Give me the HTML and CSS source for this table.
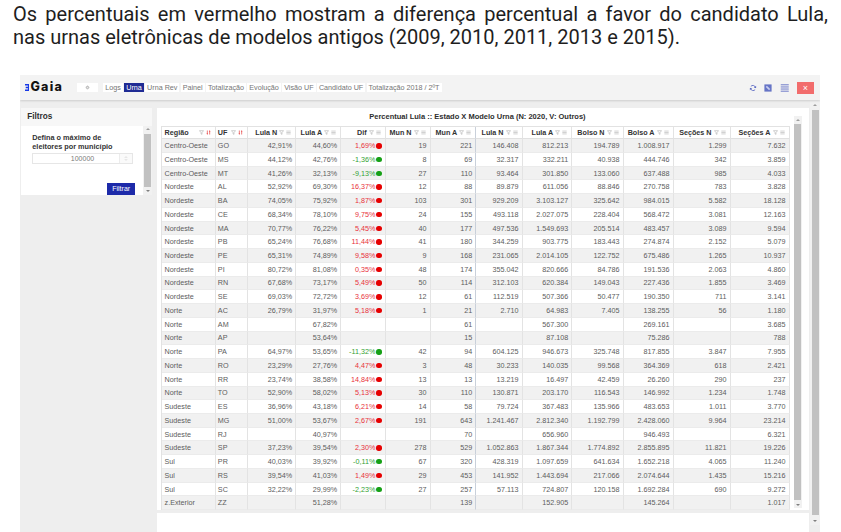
FILE: index.html
```html
<!DOCTYPE html>
<html lang="pt-BR">
<head>
<meta charset="utf-8">
<title>Gaia — Urna</title>
<link rel="stylesheet" href="styles.css">
</head>
<body>
<p class="intro"><span class="line1">Os percentuais em vermelho mostram a diferença percentual a favor do candidato Lula,</span><span class="line2">nas urnas eletrônicas de modelos antigos (2009, 2010, 2011, 2013 e 2015).</span></p>

<div class="app">
  <header class="toolbar">
    <div class="logo">
      <svg class="logo-mark" viewBox="0 0 5 8"><path d="M0 0H5V8H0V6.3H3.3V4.85H0.8V3.15H3.3V1.7H0Z" fill="#1738e6"/></svg>
      <span class="logo-text">Gaia</span>
    </div>
    <span class="gear"><svg viewBox="0 0 10 10"><circle cx="5" cy="5" r="2.9" fill="none" stroke="#8c8c8c" stroke-width="1.5" stroke-dasharray="1.4 0.9"/><circle cx="5" cy="5" r="1.7" fill="none" stroke="#8c8c8c" stroke-width="0.9"/></svg></span>
    <nav class="tabs">
      <span class="tab">Logs</span>
      <span class="tab active">Urna</span>
      <span class="tab">Urna Rev</span>
      <span class="tab">Painel</span>
      <span class="tab">Totalização</span>
      <span class="tab">Evolução</span>
      <span class="tab">Visão UF</span>
      <span class="tab">Candidato UF</span>
      <span class="tab">Totalização 2018 / 2ºT</span>
    </nav>
    <div class="tools">
      <svg class="tool" viewBox="0 0 10 10"><path d="M7.9 4.3A3.1 3.1 0 0 0 2.3 3.1M2.1 5.7A3.1 3.1 0 0 0 7.7 6.9" stroke="#5d6bc4" stroke-width="1.1" fill="none"/><path d="M8.9 2.2V5H6.1Z M1.1 7.8V5H3.9Z" fill="#5d6bc4"/></svg>
      <svg class="tool" viewBox="0 0 10 10"><rect x="0.5" y="0.5" width="9" height="9" fill="#6674c6"/><path d="M2.2 3.6L3.6 2.2L7.8 6.4L6.4 7.8Z" fill="#c9cef0"/></svg>
      <svg class="tool menu" viewBox="0 0 10 10"><path d="M0 1H10M0 3.7H10M0 6.3H10M0 9H10" stroke="#5d6bc4" stroke-width="1.1"/></svg>
      <span class="close">×</span>
    </div>
  </header>

  <div class="content">
    <aside class="filters">
      <div class="filters-head">Filtros</div>
      <div class="filters-body">
        <form class="filters-form">
          <label class="filters-label">Defina o máximo de eleitores por município</label>
          <div class="num-input"><span class="num-value">100000</span><span class="spin"><svg viewBox="0 0 6 10"><path d="M1.3 4L3 2.3L4.7 4M1.3 6L3 7.7L4.7 6" stroke="#b5b5b5" stroke-width="0.7" fill="none"/></svg></span></div>
          <div class="form-actions"><span class="btn">Filtrar</span></div>
        </form>
        <div class="vscroll small">
          <span class="arr up"></span><span class="thumb"></span><span class="arr down"></span>
        </div>
      </div>
    </aside>

    <div class="main-col">
      <section class="panel">
        <div class="panel-main">
          <div class="panel-title">Percentual Lula :: Estado X Modelo Urna (N: 2020, V: Outros)</div>
          <table class="grid">
            <colgroup>
              <col class="c1"><col class="c2"><col class="c3"><col class="c4"><col class="c5"><col class="c6"><col class="c7"><col class="c8"><col class="c9"><col class="c10"><col class="c11"><col class="c12"><col class="c13">
            </colgroup>
            <thead>
              <tr>
                <th class="tl"><div class="hd"><span class="lbl">Região</span><svg class="ic"><use href="#i-filter"/></svg><svg class="ic"><use href="#i-sort"/></svg></div></th>
                <th class="tl"><div class="hd"><span class="lbl">UF</span><svg class="ic"><use href="#i-filter"/></svg><svg class="ic"><use href="#i-sort"/></svg></div></th>
                <th><div class="hd">Lula N<svg class="ic"><use href="#i-filter"/></svg><svg class="ic"><use href="#i-menu"/></svg></div></th>
                <th><div class="hd">Lula A<svg class="ic"><use href="#i-filter"/></svg><svg class="ic"><use href="#i-menu"/></svg></div></th>
                <th><div class="hd">Dif<svg class="ic"><use href="#i-filter"/></svg><svg class="ic"><use href="#i-menu"/></svg></div></th>
                <th><div class="hd">Mun N<svg class="ic"><use href="#i-filter"/></svg><svg class="ic"><use href="#i-menu"/></svg></div></th>
                <th class="sep"><div class="hd">Mun A<svg class="ic"><use href="#i-filter"/></svg><svg class="ic"><use href="#i-menu"/></svg></div></th>
                <th><div class="hd">Lula N<svg class="ic"><use href="#i-filter"/></svg><svg class="ic"><use href="#i-menu"/></svg></div></th>
                <th><div class="hd">Lula A<svg class="ic"><use href="#i-filter"/></svg><svg class="ic"><use href="#i-menu"/></svg></div></th>
                <th><div class="hd">Bolso N<svg class="ic"><use href="#i-filter"/></svg><svg class="ic"><use href="#i-menu"/></svg></div></th>
                <th><div class="hd">Bolso A<svg class="ic"><use href="#i-filter"/></svg><svg class="ic"><use href="#i-menu"/></svg></div></th>
                <th><div class="hd">Seções N<svg class="ic"><use href="#i-filter"/></svg><svg class="ic"><use href="#i-menu"/></svg></div></th>
                <th><div class="hd">Seções A<svg class="ic"><use href="#i-filter"/></svg><svg class="ic"><use href="#i-menu"/></svg></div></th>
              </tr>
            </thead>
            <tbody>
              <tr><td class="tl">Centro-Oeste</td><td class="tl">GO</td><td>42,91%</td><td>44,60%</td><td class="dif pos">1,69%<i class="dot"></i></td><td>19</td><td class="sep">221</td><td>146.408</td><td>812.213</td><td>194.789</td><td>1.008.917</td><td>1.299</td><td>7.632</td></tr>
              <tr><td class="tl">Centro-Oeste</td><td class="tl">MS</td><td>44,12%</td><td>42,76%</td><td class="dif neg">-1,36%<i class="dot"></i></td><td>8</td><td class="sep">69</td><td>32.317</td><td>332.211</td><td>40.938</td><td>444.746</td><td>342</td><td>3.859</td></tr>
              <tr><td class="tl">Centro-Oeste</td><td class="tl">MT</td><td>41,26%</td><td>32,13%</td><td class="dif neg">-9,13%<i class="dot"></i></td><td>27</td><td class="sep">110</td><td>93.464</td><td>301.850</td><td>133.060</td><td>637.488</td><td>985</td><td>4.033</td></tr>
              <tr><td class="tl">Nordeste</td><td class="tl">AL</td><td>52,92%</td><td>69,30%</td><td class="dif pos">16,37%<i class="dot"></i></td><td>12</td><td class="sep">88</td><td>89.879</td><td>611.056</td><td>88.846</td><td>270.758</td><td>783</td><td>3.828</td></tr>
              <tr><td class="tl">Nordeste</td><td class="tl">BA</td><td>74,05%</td><td>75,92%</td><td class="dif pos">1,87%<i class="dot"></i></td><td>103</td><td class="sep">301</td><td>929.209</td><td>3.103.127</td><td>325.642</td><td>984.015</td><td>5.582</td><td>18.128</td></tr>
              <tr><td class="tl">Nordeste</td><td class="tl">CE</td><td>68,34%</td><td>78,10%</td><td class="dif pos">9,75%<i class="dot"></i></td><td>24</td><td class="sep">155</td><td>493.118</td><td>2.027.075</td><td>228.404</td><td>568.472</td><td>3.081</td><td>12.163</td></tr>
              <tr><td class="tl">Nordeste</td><td class="tl">MA</td><td>70,77%</td><td>76,22%</td><td class="dif pos">5,45%<i class="dot"></i></td><td>40</td><td class="sep">177</td><td>497.536</td><td>1.549.693</td><td>205.514</td><td>483.457</td><td>3.089</td><td>9.594</td></tr>
              <tr><td class="tl">Nordeste</td><td class="tl">PB</td><td>65,24%</td><td>76,68%</td><td class="dif pos">11,44%<i class="dot"></i></td><td>41</td><td class="sep">180</td><td>344.259</td><td>903.775</td><td>183.443</td><td>274.874</td><td>2.152</td><td>5.079</td></tr>
              <tr><td class="tl">Nordeste</td><td class="tl">PE</td><td>65,31%</td><td>74,89%</td><td class="dif pos">9,58%<i class="dot"></i></td><td>9</td><td class="sep">168</td><td>231.065</td><td>2.014.105</td><td>122.752</td><td>675.486</td><td>1.265</td><td>10.937</td></tr>
              <tr><td class="tl">Nordeste</td><td class="tl">PI</td><td>80,72%</td><td>81,08%</td><td class="dif pos">0,35%<i class="dot"></i></td><td>48</td><td class="sep">174</td><td>355.042</td><td>820.666</td><td>84.786</td><td>191.536</td><td>2.063</td><td>4.860</td></tr>
              <tr><td class="tl">Nordeste</td><td class="tl">RN</td><td>67,68%</td><td>73,17%</td><td class="dif pos">5,49%<i class="dot"></i></td><td>50</td><td class="sep">114</td><td>312.103</td><td>620.384</td><td>149.043</td><td>227.436</td><td>1.855</td><td>3.469</td></tr>
              <tr><td class="tl">Nordeste</td><td class="tl">SE</td><td>69,03%</td><td>72,72%</td><td class="dif pos">3,69%<i class="dot"></i></td><td>12</td><td class="sep">61</td><td>112.519</td><td>507.366</td><td>50.477</td><td>190.350</td><td>711</td><td>3.141</td></tr>
              <tr><td class="tl">Norte</td><td class="tl">AC</td><td>26,79%</td><td>31,97%</td><td class="dif pos">5,18%<i class="dot"></i></td><td>1</td><td class="sep">21</td><td>2.710</td><td>64.983</td><td>7.405</td><td>138.255</td><td>56</td><td>1.180</td></tr>
              <tr><td class="tl">Norte</td><td class="tl">AM</td><td></td><td>67,82%</td><td class="dif"></td><td></td><td class="sep">61</td><td></td><td>567.300</td><td></td><td>269.161</td><td></td><td>3.685</td></tr>
              <tr><td class="tl">Norte</td><td class="tl">AP</td><td></td><td>53,64%</td><td class="dif"></td><td></td><td class="sep">15</td><td></td><td>87.108</td><td></td><td>75.286</td><td></td><td>788</td></tr>
              <tr><td class="tl">Norte</td><td class="tl">PA</td><td>64,97%</td><td>53,65%</td><td class="dif neg">-11,32%<i class="dot"></i></td><td>42</td><td class="sep">94</td><td>604.125</td><td>946.673</td><td>325.748</td><td>817.855</td><td>3.847</td><td>7.955</td></tr>
              <tr><td class="tl">Norte</td><td class="tl">RO</td><td>23,29%</td><td>27,76%</td><td class="dif pos">4,47%<i class="dot"></i></td><td>3</td><td class="sep">48</td><td>30.233</td><td>140.035</td><td>99.568</td><td>364.369</td><td>618</td><td>2.421</td></tr>
              <tr><td class="tl">Norte</td><td class="tl">RR</td><td>23,74%</td><td>38,58%</td><td class="dif pos">14,84%<i class="dot"></i></td><td>13</td><td class="sep">13</td><td>13.219</td><td>16.497</td><td>42.459</td><td>26.260</td><td>290</td><td>237</td></tr>
              <tr><td class="tl">Norte</td><td class="tl">TO</td><td>52,90%</td><td>58,02%</td><td class="dif pos">5,13%<i class="dot"></i></td><td>30</td><td class="sep">110</td><td>130.871</td><td>203.170</td><td>116.543</td><td>146.992</td><td>1.234</td><td>1.748</td></tr>
              <tr><td class="tl">Sudeste</td><td class="tl">ES</td><td>36,96%</td><td>43,18%</td><td class="dif pos">6,21%<i class="dot"></i></td><td>14</td><td class="sep">58</td><td>79.724</td><td>367.483</td><td>135.966</td><td>483.653</td><td>1.011</td><td>3.770</td></tr>
              <tr><td class="tl">Sudeste</td><td class="tl">MG</td><td>51,00%</td><td>53,67%</td><td class="dif pos">2,67%<i class="dot"></i></td><td>191</td><td class="sep">643</td><td>1.241.467</td><td>2.812.340</td><td>1.192.799</td><td>2.428.060</td><td>9.964</td><td>23.214</td></tr>
              <tr><td class="tl">Sudeste</td><td class="tl">RJ</td><td></td><td>40,97%</td><td class="dif"></td><td></td><td class="sep">70</td><td></td><td>656.960</td><td></td><td>946.493</td><td></td><td>6.321</td></tr>
              <tr><td class="tl">Sudeste</td><td class="tl">SP</td><td>37,23%</td><td>39,54%</td><td class="dif pos">2,30%<i class="dot"></i></td><td>278</td><td class="sep">529</td><td>1.052.863</td><td>1.867.344</td><td>1.774.892</td><td>2.855.895</td><td>11.821</td><td>19.226</td></tr>
              <tr><td class="tl">Sul</td><td class="tl">PR</td><td>40,03%</td><td>39,92%</td><td class="dif neg">-0,11%<i class="dot"></i></td><td>67</td><td class="sep">320</td><td>428.319</td><td>1.097.659</td><td>641.634</td><td>1.652.218</td><td>4.065</td><td>11.240</td></tr>
              <tr><td class="tl">Sul</td><td class="tl">RS</td><td>39,54%</td><td>41,03%</td><td class="dif pos">1,49%<i class="dot"></i></td><td>29</td><td class="sep">453</td><td>141.952</td><td>1.443.694</td><td>217.066</td><td>2.074.644</td><td>1.435</td><td>15.216</td></tr>
              <tr><td class="tl">Sul</td><td class="tl">SC</td><td>32,22%</td><td>29,99%</td><td class="dif neg">-2,23%<i class="dot"></i></td><td>27</td><td class="sep">257</td><td>57.113</td><td>724.807</td><td>120.158</td><td>1.692.284</td><td>690</td><td>9.272</td></tr>
              <tr><td class="tl">z.Exterior</td><td class="tl">ZZ</td><td></td><td>51,28%</td><td class="dif"></td><td></td><td class="sep">139</td><td></td><td>152.905</td><td></td><td>145.264</td><td></td><td>1.017</td></tr>
            </tbody>
          </table>
        </div>
        <div class="vscroll inner">
          <span class="arr up"></span><span class="thumb"></span><span class="arr down"></span>
        </div>
      </section>
      <section class="panel next"></section>
    </div>

    <div class="vscroll outer">
      <span class="arr up"></span><span class="thumb"></span><span class="arr down"></span>
    </div>
  </div>
</div>

<svg class="defs" aria-hidden="true">
  <symbol id="i-filter" viewBox="0 0 6 6"><path d="M0.6 0.8H5.4L3.6 3.1V5.3L2.4 4.6V3.1Z" fill="none" stroke="#a3a3a3" stroke-width="0.6" stroke-linejoin="round"/></symbol>
  <symbol id="i-menu" viewBox="0 0 6 6"><path d="M0.4 1.3H5.6M0.4 3H5.6M0.4 4.7H5.6" stroke="#a3a3a3" stroke-width="0.6"/></symbol>
  <symbol id="i-sort" viewBox="0 0 6 6"><path d="M1.6 0.6V5.2M4.4 0.8V5.4" stroke="#e5393a" stroke-width="0.8"/><path d="M0.6 4.1L1.6 5.4L2.6 4.1Z M3.4 1.9L4.4 0.6L5.4 1.9Z" fill="#e5393a"/></symbol>
</svg>
</body>
</html>
```

FILE: styles.css
```css
* { box-sizing: border-box; }

body {
  margin: 0;
  background: #ffffff;
  font-family: "Liberation Sans", Arial, sans-serif;
}

/* Intro paragraph */
.intro {
  margin: 2.5px 13px 0;
  font-family: Roboto, "Noto Sans", sans-serif;
  font-size: 20px;
  line-height: 23.5px;
  color: #1e1e1e;
}
.intro .line1 { display: block; text-align: justify; text-align-last: justify; }
.intro .line2 { display: block; }

/* App frame */
.app {
  margin: 25.5px 0 0 20px;
  width: 800px;
  height: 457px;
  overflow: hidden;
  background: #eeeeee;
}

.toolbar {
  position: relative;
  z-index: 1;
  height: 25px;
  display: flex;
  align-items: center;
  background: #f3f3f3;
  box-shadow: 0 1px 2px rgba(0,0,0,0.14);
}

.logo {
  display: flex;
  align-items: center;
  width: 52.3px;
  margin-left: 5px;
}
.logo-mark { width: 4.4px; height: 7px; display: block; }
.logo-text {
  margin-left: 1px;
  font-family: Inter, "Liberation Sans", sans-serif;
  font-weight: 800;
  font-size: 12.5px;
  letter-spacing: 1.3px;
  color: #121212;
  line-height: 1;
}

.gear {
  width: 21px;
  height: 9.7px;
  background: #ffffff;
  display: flex;
  align-items: center;
  justify-content: center;
}
.gear svg { width: 5px; height: 5px; display: block; }

.tabs {
  display: flex;
  gap: 1.3px;
  margin-left: 5px;
}
.tab {
  height: 9.7px;
  line-height: 9.7px;
  padding: 0 2px;
  background: #ffffff;
  font-size: 7.2px;
  color: #757575;
  white-space: nowrap;
}
.tab.active { background: #1f2b94; color: #ffffff; }

.tools {
  margin-left: auto;
  margin-right: 6px;
  display: flex;
  align-items: center;
}
.tool { width: 8px; height: 8px; display: block; margin-right: 7.5px; }
.tool.menu { width: 9.5px; height: 8px; }
.close {
  width: 17.3px;
  height: 12px;
  background: #f26d6d;
  color: #ffffff;
  font-size: 9px;
  line-height: 12px;
  text-align: center;
}

/* Content */
.content {
  display: flex;
  height: 432px;
  padding-left: 1px;
}

.filters {
  width: 131.3px;
  margin-top: 8px;
  align-self: flex-start;
  background: #ffffff;
}
.filters-head {
  height: 17.7px;
  display: flex;
  align-items: center;
  padding-left: 6.3px;
  background: #f7f7f7;
  font-weight: bold;
  font-size: 8.2px;
  color: #2e2e2e;
}
.filters-body { display: flex; height: 69.3px; }
.filters-form {
  flex: 1;
  margin: 0;
  padding: 7px 8px 0 11.3px;
  display: flex;
  flex-direction: column;
}
.filters-label {
  display: block;
  width: 90px;
  font-weight: bold;
  font-size: 7.3px;
  line-height: 9px;
  color: #333333;
}
.num-input {
  margin-top: 2.5px;
  width: 100.4px;
  height: 11px;
  border: 1px solid #e6e6e6;
  display: flex;
  align-items: center;
}
.num-value {
  flex: 1;
  text-align: center;
  padding-left: 12.7px;
  font-size: 7px;
  color: #7a7a7a;
}
.spin {
  width: 12.7px;
  height: 100%;
  border-left: 1px solid #ececec;
  background: #fafafa;
  display: flex;
  justify-content: center;
  align-items: center;
}
.spin svg { width: 4px; height: 7px; display: block; }
.form-actions {
  margin-top: 19px;
  display: flex;
  justify-content: flex-end;
}
.btn {
  width: 28px;
  height: 11.7px;
  line-height: 11.7px;
  text-align: center;
  background: #1d2aa9;
  color: #ffffff;
  font-size: 7px;
}

/* Fake scrollbars */
.vscroll {
  display: flex;
  flex-direction: column;
  align-items: center;
  background: #f1f1f1;
}
.vscroll .arr {
  height: 7px;
  width: 100%;
  display: flex;
  align-items: center;
  justify-content: center;
}
.vscroll .arr::before {
  content: "";
  border-left: 2px solid transparent;
  border-right: 2px solid transparent;
}
.vscroll .arr.up::before { border-bottom: 2.5px solid #9d9d9d; }
.vscroll .arr.down::before { border-top: 2.5px solid #7f7f7f; }
.vscroll .thumb {
  flex: 1;
  width: 6.6px;
  background: #c1c1c1;
  margin: 1px 0;
}
.vscroll.small { width: 9px; }
.vscroll.small .thumb { width: 7px; }

.vscroll.inner {
  width: 8px;
  margin: 8px 0 2px 5px;
}
.vscroll.inner .thumb { width: 6.6px; }

.vscroll.outer {
  width: 10px;
  height: 425px;
  margin-left: 1px;
  background: #f1f1f1;
}
.vscroll.outer .arr { height: 9px; }
.vscroll.outer .thumb { width: 7px; }

/* Main column */
.main-col {
  margin-top: 8px;
  margin-left: 4.4px;
  width: 653px;
  display: flex;
  flex-direction: column;
  gap: 3px;
}
.panel {
  background: #ffffff;
  display: flex;
  padding: 0 7px 0 4.7px;
}
.panel:first-child { height: 409px; width: 652px; }
.panel.next { height: 40px; }
.panel-main { width: 627.3px; }
.panel-title {
  height: 17.7px;
  display: flex;
  align-items: center;
  justify-content: center;
  padding-left: 5px;
  font-weight: bold;
  font-size: 7.5px;
  color: #2e2e2e;
}

/* Table */
.grid {
  table-layout: fixed;
  width: 627.3px;
  border-collapse: separate;
  border-spacing: 0;
  border-top: 1px solid #e2e2e2;
  border-left: 1px solid #e2e2e2;
  font-size: 7.2px;
  color: #5c5c5c;
}
.c1 { width: 53.3px; }
.c2 { width: 32.7px; }
.c3 { width: 48px; }
.c4 { width: 45px; }
.c5 { width: 44.3px; }
.c6 { width: 45px; }
.c7 { width: 45.7px; }
.c8 { width: 46.3px; }
.c9 { width: 49.7px; }
.c10 { width: 51.3px; }
.c11 { width: 50px; }
.c12 { width: 57px; }
.c13 { width: 59px; }

.grid th,
.grid td {
  height: 13.74px;
  padding: 0 3px 0 2px;
  border-right: 1px solid #e3e3e3;
  border-bottom: 1px solid #ebebeb;
  white-space: nowrap;
  overflow: hidden;
  text-align: right;
  vertical-align: middle;
}
.grid th {
  height: 12.6px;
  padding-right: 4px;
  font-weight: bold;
  color: #333333;
  background: #ffffff;
  border-bottom-color: #e0e0e0;
}
.grid .tl { text-align: left; padding-left: 2.3px; }
.grid .sep { border-right-color: #c9d0da; }
.grid tbody tr:nth-child(odd) td { background: #f1f1f1; }

.hd {
  display: flex;
  align-items: center;
  justify-content: flex-end;
}
.hd .lbl { margin-right: auto; }
.ic { width: 5px; height: 5px; margin-left: 2px; display: block; }

.dif { padding-right: 3.5px; }
.dif.pos { color: #e8303a; }
.dif.neg { color: #33a133; }
.dot {
  display: inline-block;
  width: 5.4px;
  height: 5.4px;
  margin-left: 0.8px;
  border-radius: 50%;
  vertical-align: -0.4px;
}
.dif.pos .dot { background: #e60000; }
.dif.neg .dot { background: #16a016; }

.defs { display: block; width: 0; height: 0; overflow: hidden; }
```
